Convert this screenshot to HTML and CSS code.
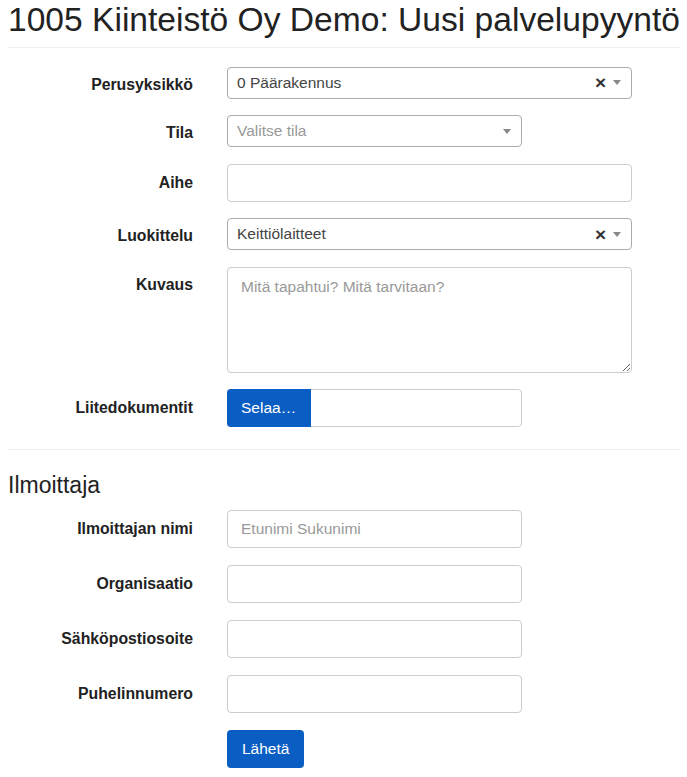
FILE: index.html
```html
<!DOCTYPE html>
<html lang="fi">
<head>
    <meta charset="UTF-8">
    <meta name="viewport" content="width=device-width, initial-scale=1.0">
    <title>Uusi palvelupyyntö</title>
    <link rel="stylesheet" href="styles.css">
</head>
<body>
<div class="page">
    <h1 class="title">1005 Kiinteistö Oy Demo: Uusi palvelupyyntö</h1>
    <hr class="divider">

    <form class="form">
        <div class="row pick">
            <label class="label">Perusyksikkö</label>
            <div class="select wide">
                <span class="value">0 Päärakennus</span>
                <span class="clear">×</span>
                <span class="arrow"></span>
            </div>
        </div>
        <div class="row pick">
            <label class="label">Tila</label>
            <div class="select half">
                <span class="value placeholder">Valitse tila</span>
                <span class="arrow"></span>
            </div>
        </div>
        <div class="row">
            <label class="label">Aihe</label>
            <input class="input wide" type="text">
        </div>
        <div class="row pick">
            <label class="label">Luokittelu</label>
            <div class="select wide">
                <span class="value">Keittiölaitteet</span>
                <span class="clear">×</span>
                <span class="arrow"></span>
            </div>
        </div>
        <div class="row top">
            <label class="label">Kuvaus</label>
            <textarea class="textarea wide" placeholder="Mitä tapahtui? Mitä tarvitaan?"></textarea>
        </div>
        <div class="row">
            <label class="label">Liitedokumentit</label>
            <div class="file half">
                <span class="browse">Selaa…</span>
            </div>
        </div>
    </form>

    <hr class="divider section">
    <h3 class="subtitle">Ilmoittaja</h3>

    <form class="form reporter">
        <div class="row">
            <label class="label">Ilmoittajan nimi</label>
            <input class="input half" type="text" placeholder="Etunimi Sukunimi">
        </div>
        <div class="row">
            <label class="label">Organisaatio</label>
            <input class="input half" type="text">
        </div>
        <div class="row">
            <label class="label">Sähköpostiosoite</label>
            <input class="input half" type="text">
        </div>
        <div class="row">
            <label class="label">Puhelinnumero</label>
            <input class="input half" type="text">
        </div>
        <div class="row">
            <span></span>
            <div><button class="send" type="button">Lähetä</button></div>
        </div>
    </form>
</div>
</body>
</html>
```

FILE: styles.css
```css
*{
    margin: 0px;
    padding: 0px;
    box-sizing: border-box;
}

body{
    font-family: 'Liberation Sans', Arial, sans-serif;
    font-size: 15.5px;
    color: #333;
    background-color: white;
}

.page {
    padding: 0 7px 0 8px;
}

.title {
    font-size: 33.6px;
    font-weight: normal;
    line-height: 1.1;
    color: #222;
    margin-top: 2px;
    white-space: nowrap;
}

.divider {
    border: 0;
    border-top: 1px solid #eee;
    margin: 8px 0 19px 0;
}

.divider.section {
    margin: 22px 0 23px 0;
}

.subtitle {
    font-size: 23px;
    font-weight: normal;
    line-height: 1.1;
    color: #222;
    margin-bottom: 11px;
}

.form {
    display: flex;
    flex-direction: column;
    gap: 16.5px;
}

.form.reporter {
    gap: 17px;
}

.row {
    display: grid;
    grid-template-columns: 185px auto;
    column-gap: 34px;
    align-items: center;
}

.row.top {
    align-items: start;
}

.label {
    text-align: right;
    font-weight: bold;
    font-size: 15.8px;
    color: #222;
}

/* select2 rows sit a bit lower, label is top aligned in the original */
.row.pick .label {
    padding-top: 4px;
}

.row.top .label {
    padding-top: 9px;
}

.wide {
    width: 405px;
}

.half {
    width: 295px;
}

/* select2 look */
.select {
    height: 32px;
    border: 1px solid #aaa;
    border-radius: 4px;
    display: flex;
    align-items: center;
    padding: 0 10px 0 9px;
    color: #444;
}

.value {
    flex: 1;
}

.placeholder {
    color: #999;
}

.clear {
    font-weight: bold;
    font-size: 19px;
    color: #333;
    margin-right: 7px;
    line-height: 1;
}

.arrow {
    width: 0;
    height: 0;
    border-left: 4px solid transparent;
    border-right: 4px solid transparent;
    border-top: 5px solid #888;
}

.input, .textarea {
    height: 38px;
    border: 1px solid #ccc;
    border-radius: 4px;
    padding: 0 13px;
    font-family: inherit;
    font-size: 15.5px;
    color: #555;
    outline: none;
}

.textarea {
    height: 106px;
    padding: 8px 13px;
    line-height: 1.4;
    resize: vertical;
}

.input::placeholder, .textarea::placeholder {
    color: #999;
}

.file {
    height: 38px;
    border: 1px solid #ccc;
    border-radius: 4px;
    display: flex;
}

.browse {
    background-color: #0a5dc2;
    color: white;
    width: 84px;
    margin: -1px 0 -1px -1px;
    border-radius: 4px 0 0 4px;
    display: flex;
    align-items: center;
    padding-left: 14px;
}

.send {
    background-color: #0a5dc2;
    color: white;
    border: 0;
    border-radius: 4px;
    height: 38px;
    padding: 0 15px;
    font-family: inherit;
    font-size: 15.5px;
}
```
